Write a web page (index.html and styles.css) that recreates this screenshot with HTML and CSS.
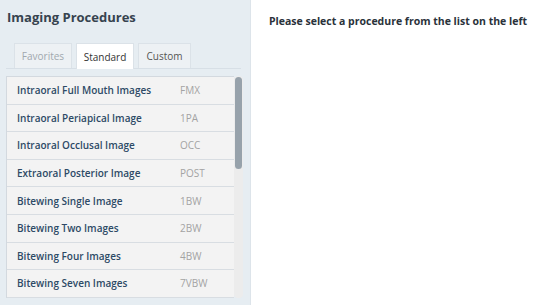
FILE: index.html
```html
<!DOCTYPE html>
<html lang="en">
<head>
  <meta charset="UTF-8">
  <title>Imaging Procedures</title>
  <link rel="stylesheet" href="styles.css">
</head>
<body>
  <div class="sidebar">
    <h1 class="sidebar-title">Imaging Procedures</h1>

    <div class="tabs">
      <div class="tab tab-muted">Favorites</div>
      <div class="tab tab-active">Standard</div>
      <div class="tab">Custom</div>
    </div>

    <div class="list-wrap">
      <div class="proc-list">
        <div class="proc-row"><span class="proc-name">Intraoral Full Mouth Images</span><span class="proc-code">FMX</span></div>
        <div class="proc-row"><span class="proc-name">Intraoral Periapical Image</span><span class="proc-code">1PA</span></div>
        <div class="proc-row"><span class="proc-name">Intraoral Occlusal Image</span><span class="proc-code">OCC</span></div>
        <div class="proc-row"><span class="proc-name">Extraoral Posterior Image</span><span class="proc-code">POST</span></div>
        <div class="proc-row"><span class="proc-name">Bitewing Single Image</span><span class="proc-code">1BW</span></div>
        <div class="proc-row"><span class="proc-name">Bitewing Two Images</span><span class="proc-code">2BW</span></div>
        <div class="proc-row"><span class="proc-name">Bitewing Four Images</span><span class="proc-code">4BW</span></div>
        <div class="proc-row"><span class="proc-name">Bitewing Seven Images</span><span class="proc-code">7VBW</span></div>
      </div>
      <div class="scrollbar">
        <div class="scroll-thumb"></div>
      </div>
    </div>
  </div>

  <div class="content">
    <h2 class="content-title">Please select a procedure from the list on the left</h2>
  </div>
</body>
</html>
```

FILE: styles.css
```css
* {
  box-sizing: border-box;
  margin: 0;
  padding: 0;
}

html, body {
  height: 100%;
}

body {
  font-family: 'Open Sans', 'Liberation Sans', sans-serif;
  background: #fff;
  color: #333;
  display: flex;
  overflow: hidden;
}

.sidebar {
  width: 251px;
  flex-shrink: 0;
  background: #e6edf2;
  border-right: 1px solid #dde4ea;
  padding: 7px 7px 0 6px;
  display: flex;
  flex-direction: column;
}

.sidebar-title {
  font-size: 13px;
  font-weight: 700;
  color: #36434f;
  line-height: 20px;
  padding-left: 1px;
}

.tabs {
  display: flex;
  gap: 4px;
  margin-top: 16px;
  padding-left: 8px;
  border-bottom: 1px solid #d7dfe6;
  margin-right: 2px;
}

.tab {
  width: 53px;
  height: 25px;
  margin-bottom: -1px;
  border: 1px solid #dbe2e8;
  border-bottom: none;
  background: #edf1f4;
  color: #555;
  font-size: 10px;
  display: flex;
  align-items: center;
  justify-content: center;
}

.tab-muted {
  width: 58px;
  color: #a1a8ae;
}

.tab-active {
  width: 58px;
  background: #fff;
  color: #333;
  height: 26px;
}

.list-wrap {
  display: flex;
  margin-top: 7px;
  height: 222px;
}

.proc-list {
  width: 228px;
  border: 1px solid #d3d9df;
  border-right: none;
  border-bottom: none;
  background: #f3f3f3;
  overflow: hidden;
}

.proc-row {
  height: 27.6px;
  display: flex;
  align-items: center;
  padding-left: 10px;
  border-bottom: 1px solid #d8dde2;
  background: #f3f3f3;
  font-size: 10px;
}

.proc-name {
  width: 163px;
  font-weight: 600;
  color: #2d4a66;
}

.proc-code {
  color: #a3a3a3;
}

.scrollbar {
  width: 9px;
  background: #ececec;
  border-radius: 4px;
  padding: 1px;
}

.scroll-thumb {
  height: 92px;
  background: #97a2ab;
  border-radius: 4px;
}

.content {
  flex: 1;
  padding: 13px 0 0 18px;
}

.content-title {
  font-size: 10.5px;
  font-weight: 700;
  color: #2a323a;
  line-height: 16px;
}
```
